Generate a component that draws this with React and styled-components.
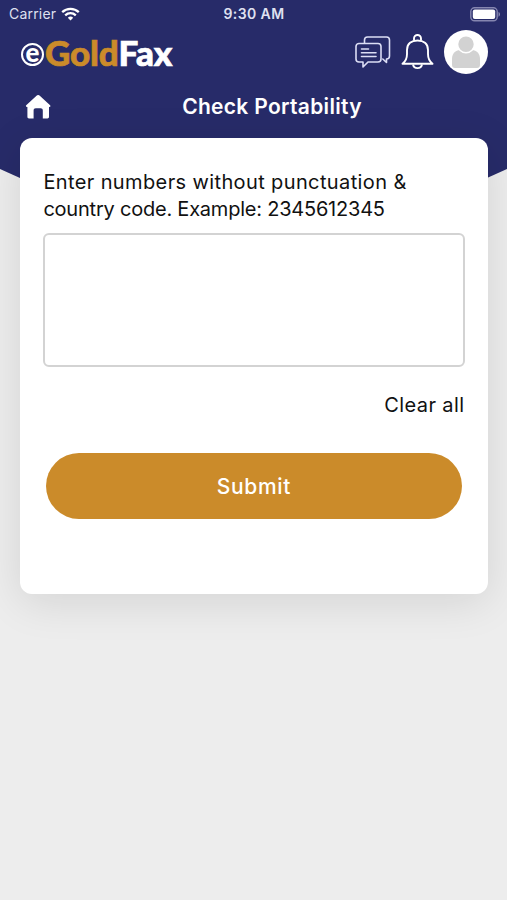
import React from "react";
import styled, { createGlobalStyle } from "styled-components";

const colors = {
  navy: "#272b69",
  gold: "#cb8b2a",
  page: "#ededed",
  border: "#d3d3d3",
  text: "#111",
};

const GlobalStyle = createGlobalStyle`
  * {
    box-sizing: border-box;
  }

  body {
    margin: 0;
    background-color: ${colors.page};
    font-family: Inter, "Open Sans", sans-serif;
    color: ${colors.text};
  }
`;

const Screen = styled.div`
  min-height: 900px;
  overflow: hidden;
  background-color: ${colors.page};
`;

const Header = styled.header`
  height: 283px;
  background-color: ${colors.navy};
  color: #fff;
  clip-path: polygon(0 0, 100% 0, 100% 169px, 50% 100%, 0 169px);
`;

const StatusBar = styled.div`
  height: 28px;
  padding: 0 6px 0 9px;
  display: grid;
  grid-template-columns: 1fr auto 1fr;
  align-items: center;
  font-size: 14px;
  line-height: 28px;
  color: #dfe0f0;
`;

const Carrier = styled.span`
  display: flex;
  align-items: center;
  gap: 5px;
  letter-spacing: 0.2px;
`;

const Clock = styled.span`
  margin-right: 2px;
  font-weight: 600;
  letter-spacing: 0.4px;
`;

const BatteryIcon = styled.svg`
  justify-self: end;
`;

const TopBar = styled.div`
  height: 48px;
  padding: 0 19px 0 20px;
  display: flex;
  justify-content: space-between;
  align-items: center;
`;

const Logo = styled.div`
  display: flex;
  align-items: center;
  font-family: Lato, sans-serif;
  font-weight: 900;
  font-size: 35px;
  line-height: 48px;
`;

const LogoMark = styled.span`
  width: 23px;
  height: 23px;
  margin: 4px 1px 0 1px;
  border: 2.5px solid #fff;
  border-radius: 50%;
  display: flex;
  justify-content: center;
  font-size: 26px;
  line-height: 14px;
`;

const LogoWord = styled.span`
  margin-top: -1px;
  color: ${({ $gold }) => ($gold ? colors.gold : "#fff")};
  letter-spacing: ${({ $gold }) => ($gold ? -0.2 : 0)}px;
  -webkit-text-stroke: 0.7px currentColor;
`;

const Actions = styled.div`
  display: flex;
  align-items: center;
`;

const ChatIcon = styled.svg`
  margin-right: 10px;
`;

const BellIcon = styled.svg`
  margin-right: 10px;
`;

const TitleBar = styled.div`
  height: 60px;
  padding: 1px 25px 0;
  display: grid;
  grid-template-columns: 26px 1fr;
  align-items: center;
`;

const Title = styled.h1`
  margin: 0 0 0 11px;
  text-align: center;
  font-size: 21px;
  font-weight: 600;
  line-height: 28px;
  letter-spacing: 0.3px;
`;

const Card = styled.main`
  position: relative;
  height: 455.5px;
  margin: -145px 19.5px 0 20.4px;
  padding: 31px 23px 0;
  border-radius: 12px;
  background-color: #fff;
  box-shadow: 0 8px 44px rgba(0, 0, 0, 0.11);
`;

const Label = styled.label`
  display: block;
  height: 54px;
  font-size: 20px;
  line-height: 27px;
`;

const Line = styled.span`
  display: block;
  white-space: nowrap;
  letter-spacing: ${({ $spacing }) => $spacing}px;
`;

const NumbersInput = styled.textarea`
  display: block;
  width: 100%;
  height: 134px;
  margin-top: 10px;
  padding: 10px;
  border: 2px solid ${colors.border};
  border-radius: 6px;
  outline: 0;
  resize: none;
  background-color: #fff;
  font: inherit;
`;

const ClearButton = styled.button`
  display: block;
  height: 30px;
  margin: 23px 0 0 auto;
  padding: 0;
  border: 0;
  background: none;
  color: ${colors.text};
  font: inherit;
  font-size: 20px;
  line-height: 30px;
  letter-spacing: 0.4px;
`;

const SubmitButton = styled.button`
  display: block;
  width: calc(100% - 5px);
  height: 66px;
  margin: 33px auto 0;
  padding: 0;
  border: 0;
  border-radius: 33px;
  background-color: ${colors.gold};
  color: #fff;
  font: inherit;
  font-size: 21px;
  font-weight: 500;
  letter-spacing: 0.7px;
`;

const Wifi = () => (
  <svg width="19" height="14" viewBox="0 0 19 14" fill="none" stroke="#fff" strokeWidth="2.3">
    <path d="M1.2 5.2a12 12 0 0 1 16.6 0" />
    <path d="M4.2 8.3a7.7 7.7 0 0 1 10.6 0" />
    <path d="M9.5 13.5 6.8 10.8a3.9 3.9 0 0 1 5.4 0z" fill="#fff" stroke="none" />
  </svg>
);

const Battery = () => (
  <BatteryIcon width="31" height="15" viewBox="0 0 31 15">
    <rect x="0.8" y="0.8" width="26.4" height="13" rx="3.8" fill="none" stroke="#8586b0" strokeWidth="1.4" />
    <rect x="2.8" y="2.6" width="22.4" height="9.4" rx="2" fill="#fff" />
    <path d="M28.5 5c2 .7 2 4 0 4.7z" fill="#8586b0" />
  </BatteryIcon>
);

const Chat = () => (
  <ChatIcon
    width="37"
    height="34"
    viewBox="0 0 37 34"
    fill="none"
    stroke="#dcdef5"
    strokeWidth="1.6"
    strokeLinejoin="round"
    strokeLinecap="round"
  >
    <path d="M10.5 8V5a3 3 0 0 1 3-3h19a3 3 0 0 1 3 3v16a3 3 0 0 1-3 3v3.5L28.8 24" />
    <path d="M5 8.5h19a3 3 0 0 1 3 3V24a3 3 0 0 1-3 3H14l-5 5v-5H5a3 3 0 0 1-3-3V11.5a3 3 0 0 1 3-3z" />
    <path d="M7.5 14h7M7.5 17.7h14.5M7.5 21.5h14.5" />
  </ChatIcon>
);

const Bell = () => (
  <BellIcon
    width="33"
    height="36"
    viewBox="0 0 33 36"
    fill="none"
    stroke="#fff"
    strokeWidth="1.9"
    strokeLinejoin="round"
  >
    <path d="M13 6.5V4.5a3.5 3.5 0 0 1 7 0v2" />
    <path d="M1.5 29.8C4.5 27.5 6 24.5 6 20v-4C6 9.500 10.500 6.500 16.500 6.500S27 9.500 27 16v4c0 4.500 1.500 7.500 4.500 9.800z" />
    <path d="M12 30.5a4.6 4.6 0 0 0 9 0" />
  </BellIcon>
);

const Avatar = () => (
  <svg width="44" height="44" viewBox="0 0 44 44">
    <circle cx="22" cy="22" r="22" fill="#fff" />
    <path d="M8 35v-6c0-5.500 3.500-9 8-9h12c4.500 0 8 3.500 8 9v6c0 2-1.200 3-3 3H11c-1.800 0-3-1-3-3z" fill="#d2d2d2" />
    <circle cx="22" cy="14.2" r="8.500" fill="#d2d2d2" stroke="#fff" strokeWidth="1.6" />
  </svg>
);

const Home = () => (
  <svg width="26" height="24" viewBox="0 0 26 24" fill="#fff">
    <path d="M11.8.6a2 2 0 0 1 2.7 0l10.600 9.600c.7.700.3 1.700-.6 1.700H24v9.900c0 1-.6 1.600-1.600 1.600h-4.600v-8c0-1.400-.8-2.200-2.200-2.200h-4.800c-1.400 0-2.200.8-2.200 2.200v8H4c-1 0-1.600-.6-1.600-1.600v-9.900H1.800c-1 0-1.300-1-.6-1.700z" />
  </svg>
);

const App = () => (
  <>
    <GlobalStyle />
    <Screen>
      <Header>
        <StatusBar>
          <Carrier>
            Carrier
            <Wifi />
          </Carrier>
          <Clock>9:30 AM</Clock>
          <Battery />
        </StatusBar>
        <TopBar>
          <Logo>
            <LogoMark>e</LogoMark>
            <LogoWord $gold>Gold</LogoWord>
            <LogoWord>Fax</LogoWord>
          </Logo>
          <Actions>
            <Chat />
            <Bell />
            <Avatar />
          </Actions>
        </TopBar>
        <TitleBar>
          <Home />
          <Title>Check Portability</Title>
        </TitleBar>
      </Header>
      <Card>
        <Label htmlFor="numbers">
          <Line $spacing={0.38}>Enter numbers without punctuation &amp;</Line>
          <Line $spacing={-0.22}>country code. Example: 2345612345</Line>
        </Label>
        <NumbersInput id="numbers" />
        <ClearButton type="button">Clear all</ClearButton>
        <SubmitButton type="submit">Submit</SubmitButton>
      </Card>
    </Screen>
  </>
);

export default App;
